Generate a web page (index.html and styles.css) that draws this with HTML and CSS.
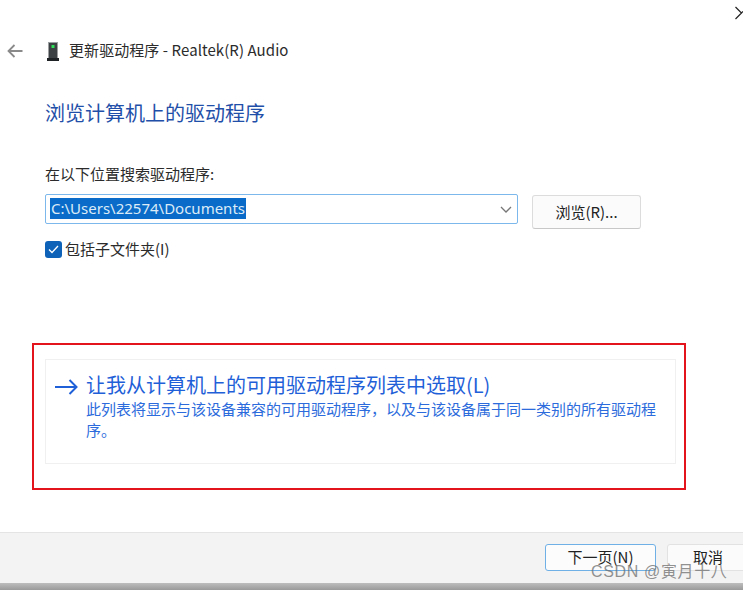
FILE: index.html
```html
<!DOCTYPE html>
<html lang="zh-CN">
<head>
<meta charset="utf-8">
<title>更新驱动程序</title>
<link rel="stylesheet" href="styles.css">
</head>
<body>
<div class="window">
  <main class="content">
    <div class="close-row">
      <svg class="close-icon" width="8" height="14" viewBox="0 0 8 14"><path d="M0.500 1L6.500 7 0.500 13M6 7.500L8 5.500" fill="none" stroke="#222" stroke-width="1.200"/></svg>
    </div>
    <header class="titlebar">
      <svg class="back-icon" width="16" height="14" viewBox="0 0 16 14"><path d="M15.500 7H1.500M7.500 1L1.500 7l6 6" fill="none" stroke="#8a8a8a" stroke-width="1.800"/></svg>
      <svg class="device-icon" width="12" height="19" viewBox="0 0 12 19"><rect x="1.500" y="0" width="9" height="16" fill="#3c4143"/><rect x="1.500" y="0" width="9" height="1" fill="#9aa0a2"/><rect x="4.500" y="3" width="3" height="3" fill="#2fe05a"/><rect x="0" y="16" width="12" height="3" fill="#1f2224"/></svg>
      <span class="window-title">更新驱动程序 - Realtek(R) Audio</span>
    </header>
    <h1 class="heading">浏览计算机上的驱动程序</h1>
    <div class="label">在以下位置搜索驱动程序:</div>
    <div class="path-row">
      <div class="combo">
        <span class="combo-text">C:\Users\22574\Documents</span>
        <svg class="chevron" width="12" height="7" viewBox="0 0 12 7"><path d="M1 1l5 5 5-5" fill="none" stroke="#777" stroke-width="1.300"/></svg>
      </div>
      <div class="button browse">浏览(R)...</div>
    </div>
    <div class="check-row">
      <span class="checkbox"><svg width="11" height="9" viewBox="0 0 11 9"><path d="M1 4.500l3 3 6-6.500" fill="none" stroke="#fff" stroke-width="1.300"/></svg></span>
      <span class="check-label">包括子文件夹(I)</span>
    </div>
    <section class="card">
      <svg class="card-arrow" width="23" height="16" viewBox="0 0 23 16"><path d="M0 8h21.500M14.500 1l7 7-7 7" fill="none" stroke="#1f5fd8" stroke-width="2"/></svg>
      <div class="card-body">
        <div class="card-title">让我从计算机上的可用驱动程序列表中选取(L)</div>
        <div class="card-text">此列表将显示与该设备兼容的可用驱动程序，以及与该设备属于同一类别的所有驱动程序。</div>
      </div>
    </section>
  </main>
  <footer class="footer">
    <div class="button next">下一页(N)</div>
    <div class="button cancel">取消</div>
  </footer>
  <div class="bottom-strip"></div>
  <div class="annotation"></div>
  <div class="watermark">CSDN @寅月十八</div>
</div>
</body>
</html>
```
FILE: styles.css
```css
* { box-sizing: border-box; }
html, body { margin: 0; padding: 0; }
body {
  width: 743px;
  height: 590px;
  overflow: hidden;
  background: #fff;
  font-family: "Noto Sans CJK SC", "Noto Sans", sans-serif;
  color: #222;
}
.window {
  position: relative;
  width: 743px;
  height: 590px;
  display: flex;
  flex-direction: column;
  overflow: hidden;
}
.content { flex: 1; padding-left: 45px; min-height: 0; }
.close-row { height: 38px; display: flex; justify-content: flex-end; padding-top: 6px; }
.titlebar {
  height: 26px;
  margin-left: -38px;
  display: flex;
  align-items: center;
  font-size: 15px;
  line-height: 26px;
}
.back-icon { margin-right: 24px; }
.device-icon { margin-right: 10px; }
.window-title { color: #2b2b2b; white-space: nowrap; letter-spacing: 0.07px; position: relative; top: -1px; }
.heading {
  margin: 34px 0 0;
  font-size: 20px;
  font-weight: 400;
  line-height: 30px;
  color: #1f4fa8;
}
.label { margin-top: 35px; font-size: 15px; line-height: 22px; color: #2b2b2b; }
.path-row { display: flex; align-items: flex-start; margin-top: 9px; }
.combo {
  width: 473px;
  height: 30px;
  border: 1px solid #7db8ec;
  border-radius: 2px;
  display: flex;
  align-items: center;
  justify-content: space-between;
  padding: 0 5px 2px 4px;
}
.chevron { position: relative; top: 1px; }
.combo-text {
  background: #0a6cc8;
  color: #dcebf8;
  font-family: "Noto Sans", sans-serif;
  font-size: 15px;
  line-height: 21px;
  padding: 0 1px;
  white-space: nowrap;
}
.button {
  display: flex;
  align-items: center;
  justify-content: center;
  background: #fbfbfb;
  border: 1px solid #dcdcdc;
  border-bottom-color: #c8c8c8;
  border-radius: 3px;
  padding-bottom: 2px;
  font-size: 15px;
  color: #222;
}
.browse { width: 109px; height: 34px; margin: 1px 0 0 14px; }
.check-row {
  display: flex;
  align-items: center;
  gap: 3px;
  margin-top: 10px;
  height: 20px;
  font-size: 15px;
  color: #2b2b2b;
}
.check-label { position: relative; top: -1px; }
.checkbox {
  width: 17px;
  height: 17px;
  background: #0e62b8;
  border-radius: 3px;
  display: flex;
  align-items: center;
  justify-content: center;
}
.card {
  width: 631px;
  height: 105px;
  margin-top: 100px;
  border: 1px solid #f0f0f0;
  display: flex;
  padding: 13px 0 0 9px;
}
.card-arrow { flex: none; margin: 6px 8px 0 0; }
.card-body { width: 572px; }
.card-title { font-size: 20px; line-height: 24px; color: #1f5fd8; white-space: nowrap; }
.card-text { font-size: 15px; line-height: 21px; color: #2c6bdc; margin-top: 1px; }
.footer {
  height: 51px;
  flex: none;
  background: #f3f3f3;
  border-top: 1px solid #e4e4e4;
  display: flex;
  padding: 11px 0 0 545px;
  gap: 11px;
  align-items: flex-start;
}
.next {
  width: 111px;
  height: 27px;
  flex: none;
  background: #fcfcfc;
  border: 1px solid #6fb0e6;
}
.cancel { width: 82px; height: 27px; flex: none; border-color: #e2e2e2; }
.bottom-strip { height: 7px; flex: none; background: linear-gradient(#bdbdbd, #9a9a9a); }
.annotation {
  position: absolute;
  left: 32px;
  top: 343px;
  width: 654px;
  height: 147px;
  border: 2px solid #e3141c;
}
.watermark {
  position: absolute;
  left: 591px;
  top: 561px;
  font-family: "Liberation Sans", "Noto Sans CJK SC", sans-serif;
  font-size: 16px;
  letter-spacing: 0.65px;
  line-height: 22px;
  color: rgba(110, 110, 110, 0.75);
  white-space: nowrap;
}
```
